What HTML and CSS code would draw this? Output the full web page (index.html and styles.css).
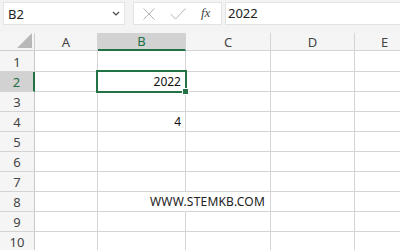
FILE: index.html
```html
<!DOCTYPE html>
<html>
<head>
<meta charset="utf-8">
<link rel="stylesheet" href="styles.css">
</head>
<body>
<div class="topbar">
  <div class="namebox">
    <span class="name">B2</span>
    <svg class="chev" width="8" height="5" viewBox="0 0 8 5"><path d="M1 1 L4 4 L7 1" fill="none" stroke="#444" stroke-width="1.2"/></svg>
  </div>
  <div class="tools">
    <svg class="icon" width="12" height="12" viewBox="0 0 12 12"><path d="M0.5 0.5 L11.5 11.5 M11.5 0.5 L0.5 11.5" stroke="#b4b4b4" stroke-width="1"/></svg>
    <svg class="icon check" width="16" height="12" viewBox="0 0 16 12"><path d="M0.5 6 L5.5 11 L15.5 0.5" fill="none" stroke="#b4b4b4" stroke-width="1"/></svg>
    <span class="fx">fx</span>
  </div>
  <div class="formula">2022</div>
</div>
<div class="sheet">
  <div class="hd corner"><span class="tri"></span></div>
  <div class="hd col">A</div>
  <div class="hd col sel">B</div>
  <div class="hd col">C</div>
  <div class="hd col">D</div>
  <div class="hd col last">E</div>

  <div class="hd row">1</div><div class="c"></div><div class="c"></div><div class="c"></div><div class="c"></div><div class="c"></div>
  <div class="hd row rsel">2</div><div class="c"></div><div class="c active"><span class="val">2022</span><span class="handle"></span></div><div class="c"></div><div class="c"></div><div class="c"></div>
  <div class="hd row">3</div><div class="c"></div><div class="c"></div><div class="c"></div><div class="c"></div><div class="c"></div>
  <div class="hd row">4</div><div class="c"></div><div class="c num">4</div><div class="c"></div><div class="c"></div><div class="c"></div>
  <div class="hd row">5</div><div class="c"></div><div class="c"></div><div class="c"></div><div class="c"></div><div class="c"></div>
  <div class="hd row">6</div><div class="c"></div><div class="c"></div><div class="c"></div><div class="c"></div><div class="c"></div>
  <div class="hd row">7</div><div class="c"></div><div class="c"></div><div class="c"></div><div class="c"></div><div class="c"></div>
  <div class="hd row">8</div><div class="c"></div><div class="c noright"></div><div class="c num txt"><span>WWW.STEMKB.COM</span></div><div class="c"></div><div class="c"></div>
  <div class="hd row">9</div><div class="c"></div><div class="c"></div><div class="c"></div><div class="c"></div><div class="c"></div>
  <div class="hd row">10</div><div class="c"></div><div class="c"></div><div class="c"></div><div class="c"></div><div class="c"></div>
</div>
</body>
</html>
```
FILE: styles.css
```css
html, body {
  margin: 0;
  padding: 0;
  background: #ffffff;
  overflow: hidden;
  width: 400px;
  height: 250px;
  font-family: "Noto Sans", "Open Sans", sans-serif;
}

.topbar {
  height: 33px;
  box-sizing: border-box;
  background: #f3f3f3;
  display: flex;
  align-items: flex-start;
  padding: 2px 0 0 3px;
}

.namebox {
  width: 122px;
  height: 23px;
  box-sizing: border-box;
  background: #fff;
  border: 1px solid #e3e3e3;
  display: flex;
  align-items: center;
  justify-content: space-between;
  padding: 0 3px 0 4px;
}

.name {
  font-size: 13px;
  color: #222;
}

.chev {
  margin-right: 1px;
}

.tools {
  margin-left: 8px;
  width: 89px;
  height: 23px;
  box-sizing: border-box;
  background: #fff;
  border: 1px solid #e3e3e3;
  display: flex;
  align-items: center;
  padding-left: 9px;
}

.icon {
  display: block;
}

.check {
  margin-left: 15px;
}

.fx {
  margin-left: 15px;
  font-family: "Liberation Serif", "DejaVu Serif", serif;
  font-style: italic;
  font-size: 13px;
  color: #444;
  margin-top: -1px;
}

.formula {
  margin-left: 3px;
  flex: 1;
  height: 23px;
  box-sizing: border-box;
  background: #fff;
  border: 1px solid #e3e3e3;
  border-right: none;
  font-size: 13px;
  color: #222;
  line-height: 21px;
  padding-left: 2px;
}

.sheet {
  display: grid;
  grid-template-columns: 35px 63px 88px 85px 84px 60px;
  grid-template-rows: 18px 21px repeat(9, 20px);
  font-size: 12px;
}

.hd {
  background: #f5f5f5;
  color: #444;
  box-sizing: border-box;
  border-right: 1px solid #d4d4d4;
  border-bottom: 1px solid #d4d4d4;
  display: flex;
  align-items: center;
  justify-content: center;
  font-size: 13px;
}

.col {
  border-right: 1px solid #d4d4d4;
}

.col.sel {
  background: #d2d2d2;
  color: #1f6f43;
  border-bottom: 2px solid #217346;
}

.corner {
  position: relative;
  background: #f5f5f5;
  border-bottom: 1px solid #cfcfcf;
  border-right: 1px solid #cfcfcf;
}

.tri {
  position: absolute;
  right: 2px;
  bottom: 2px;
  width: 0;
  height: 0;
  border-left: 15px solid transparent;
  border-bottom: 15px solid #b8b8b8;
}

.row {
  border-right: 1px solid #c8c8c8;
  border-bottom: 1px solid #d4d4d4;
  background: #f5f5f5;
  padding-top: 1px;
}

.row.rsel {
  background: #d2d2d2;
  color: #1f6f43;
  border-right: 2px solid #217346;
}

.c {
  box-sizing: border-box;
  border-right: 1px solid #d4d4d4;
  border-bottom: 1px solid #d4d4d4;
  background: #fff;
  color: #111;
  display: flex;
  align-items: center;
  justify-content: flex-end;
  padding-right: 4px;
  white-space: nowrap;
}

.c.noright {
  border-right-color: #fff;
}

.c.txt {
  padding-right: 5px;
  letter-spacing: 0.2px;
  color: #222;
}

.active {
  position: relative;
  overflow: visible;
}

.active::before {
  content: "";
  position: absolute;
  left: -2px;
  top: -2px;
  right: -2px;
  bottom: -2px;
  border: 2px solid #217346;
  z-index: 2;
}

.val {
  position: relative;
  z-index: 3;
}

.handle {
  position: absolute;
  right: -4px;
  bottom: -4px;
  width: 5px;
  height: 5px;
  background: #217346;
  border: 1px solid #fff;
  z-index: 4;
}
```
